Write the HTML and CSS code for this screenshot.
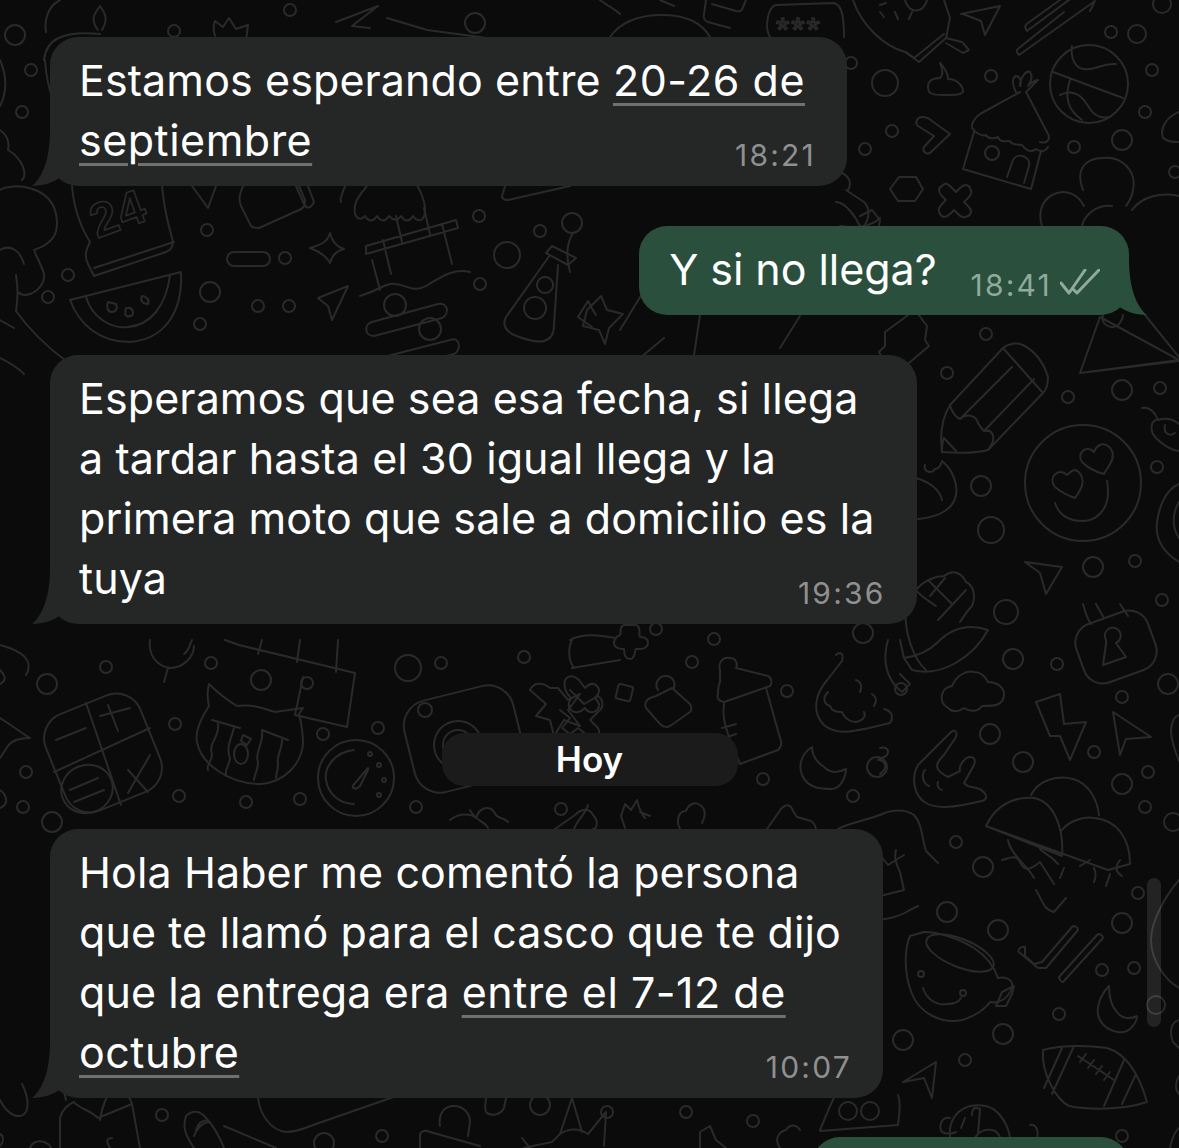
FILE: index.html
```html
<!DOCTYPE html>
<html lang="es">
<head>
<meta charset="UTF-8">
<title>Chat</title>
<meta name="viewport" content="width=device-width,initial-scale=1.0">
<link rel="stylesheet" href="styles.css">
</head>
<body>
<svg class="wallpaper" viewBox="0 0 1179 1148" aria-hidden="true">
  <!-- dots -->
  <g>
    <circle cx="15" cy="35" r="10"/><circle cx="31" cy="70" r="6"/><circle cx="22" cy="112" r="6"/><circle cx="174" cy="31" r="6"/><circle cx="290" cy="10" r="6"/><circle cx="475" cy="23" r="10"/>
    <circle cx="207" cy="230" r="6"/><circle cx="285" cy="258" r="6"/><circle cx="479" cy="216" r="6"/><circle cx="540" cy="231" r="6"/><circle cx="572" cy="223" r="10"/><circle cx="507" cy="255" r="13"/>
    <circle cx="68" cy="275" r="6"/><circle cx="48" cy="297" r="6"/><circle cx="210" cy="292" r="10"/><circle cx="200" cy="324" r="6"/><circle cx="258" cy="306" r="6"/><circle cx="289" cy="306" r="6"/><circle cx="480" cy="284" r="6"/>
    <circle cx="885" cy="83" r="13"/><circle cx="991" cy="76" r="6"/><circle cx="892" cy="131" r="6"/><circle cx="865" cy="149" r="6"/><circle cx="1111" cy="32" r="6"/><circle cx="1137" cy="34" r="9"/><circle cx="1152" cy="70" r="6"/><circle cx="1145" cy="112" r="6"/><circle cx="1074" cy="147" r="6"/><circle cx="1122" cy="140" r="10"/><circle cx="1175" cy="172" r="6"/><circle cx="992" cy="153" r="7"/><circle cx="851" cy="63" r="6"/><circle cx="1162" cy="4" r="9"/>
    <circle cx="986" cy="334" r="6"/><circle cx="947" cy="373" r="6"/><circle cx="1068" cy="397" r="6"/><circle cx="1122" cy="390" r="10"/><circle cx="1160" cy="388" r="6"/><circle cx="1157" cy="467" r="6"/><circle cx="981" cy="486" r="10"/><circle cx="991" cy="530" r="13"/><circle cx="1093" cy="567" r="10"/><circle cx="1135" cy="561" r="6"/><circle cx="1162" cy="600" r="6"/>
    <circle cx="1006" cy="612" r="12"/><circle cx="1013" cy="659" r="10"/><circle cx="1057" cy="664" r="6"/><circle cx="901" cy="689" r="6"/><circle cx="990" cy="734" r="10"/><circle cx="1023" cy="762" r="10"/><circle cx="1094" cy="752" r="6"/><circle cx="1122" cy="697" r="6"/><circle cx="1122" cy="784" r="10"/><circle cx="1148" cy="772" r="6"/><circle cx="1145" cy="807" r="6"/><circle cx="1168" cy="684" r="10"/><circle cx="1173" cy="822" r="9"/><circle cx="956" cy="842" r="6"/><circle cx="983" cy="867" r="10"/>
    <circle cx="947" cy="912" r="10"/><circle cx="998" cy="930" r="10"/><circle cx="1122" cy="923" r="10"/><circle cx="1138" cy="893" r="6"/><circle cx="1102" cy="970" r="6"/><circle cx="1134" cy="968" r="6"/><circle cx="1059" cy="1014" r="6"/><circle cx="1003" cy="1034" r="10"/><circle cx="903" cy="1040" r="10"/><circle cx="965" cy="1060" r="6"/><circle cx="1122" cy="1136" r="6"/><circle cx="753" cy="1121" r="6"/><circle cx="1156" cy="1005" r="9"/>
    <circle cx="106" cy="667" r="6"/><circle cx="47" cy="684" r="10"/><circle cx="211" cy="663" r="6"/><circle cx="261" cy="680" r="10"/><circle cx="307" cy="683" r="6"/><circle cx="408" cy="668" r="13"/><circle cx="441" cy="663" r="6"/><circle cx="524" cy="657" r="6"/><circle cx="175" cy="724" r="6"/><circle cx="323" cy="734" r="6"/><circle cx="378" cy="728" r="6"/><circle cx="26" cy="772" r="6"/><circle cx="179" cy="796" r="6"/><circle cx="246" cy="802" r="6"/><circle cx="300" cy="799" r="6"/><circle cx="416" cy="807" r="6"/><circle cx="561" cy="809" r="6"/><circle cx="23" cy="807" r="6"/><circle cx="52" cy="822" r="10"/>
    <circle cx="656" cy="629" r="6"/><circle cx="714" cy="639" r="6"/><circle cx="692" cy="662" r="6"/><circle cx="787" cy="691" r="6"/><circle cx="863" cy="633" r="10"/><circle cx="877" cy="767" r="10"/><circle cx="763" cy="779" r="6"/><circle cx="853" cy="796" r="6"/>
    <circle cx="162" cy="1115" r="6"/><circle cx="382" cy="1136" r="6"/><circle cx="607" cy="1112" r="6"/><circle cx="686" cy="1112" r="6"/><circle cx="324" cy="1143" r="10"/><circle cx="540" cy="1105" r="10"/>
  </g>
  <!-- top row -->
  <path d="M44 60C46 40 62 30 100 34M98 30c-8-10-4-16 2-24 6 8 8 14 2 24M45 60c2 30 10 50 25 72"/>
  <path d="M215 36c-3-8 0-15 0-15l8 6 6-9 7 11 12-4-2 16"/>
  <path d="M336 22l42-16-26 20 18 2M387 18l40 12 60 8"/>
  <path d="M770 37c-6-10-2-30 6-32l58-2c8 2 10 14 10 34" />
  <text class="doodle-text" x="776" y="41">***</text>
  <path d="M712 4l24 7c4 1 6 0 7-4l3-7M706 0l-2 14c-1 4 1 7 4 8l22 6"/>
  <path d="M610 37c10-14 28-22 52-22s40 8 48 22M600 0c8 6 16 10 20 14M660 0l14 6"/>
  <!-- top right -->
  <path d="M853 0c8 24 30 46 52 52l14 10 27-24 4-20-6-18M906 52l8 6 30-24M946 38l16 4 7 8-6 3-17-10"/>
  <path d="M905 0c4 14 18 14 22 0M880 5l6-2M912 12l-3 7M895 12l3 7M880 12l4 5"/>
  <path d="M963 14l-2 0 39-8-15 29-4-14z"/>
  <path d="M1027 31l54-40M1027 31c-3-4-2-6 1-8l32-23M1019 55l76-54M1019 55c-3-3-3-5 0-7l45-36M1094 3l-4 8"/>
  <circle cx="1089" cy="84" r="39"/>
  <path d="M1053 72l70 26M1072 46c-2 14 5 23 12 23 10 2 18-6 32-5M1070 80c-6 18-2 30 12 40M1060 95c16-8 24 4 30 14 4 6 10 10 20 8"/>
  <path d="M940 63c5 6 8 10 8 16 10 0 15 8 15 12s-8 4-20 4-15-2-15-8 4-9 12-9c4-4 2-9 0-15z"/>
  <path d="M1016 92c-4-8-4-14 0-16 4 0 6 6 4 10 0-8 6-16 10-14 3 4 1 10-2 14 4-4 8-6 10-6l-12 12 22 42c3 6-2 10-8 8M1020 92l-40 22c-8 6-10 14-6 16"/>
  <path d="M974 131c4 2 8 6 12 4 2 4 8 4 12 2 2 6 8 4 12 4 2 4 8 4 12 4 4 6 10 8 14 4 6 4 10 2 12-2M974 132l-11 37 68 20 10-38M1007 177l6-17c4-8 18-4 16 6l-5 17"/>
  <path d="M922 117c4 0 8 2 10 4l18 13-20 19c-4 2-8-2-6-6l10-11-16-10c-4-4 0-9 4-9z"/>
  <path d="M899 177l17 0 7 12-8 12h-17l-8-12z"/>
  <path d="M942 186c4-4 6-2 10 2l4 4 4-4c4-4 8-4 10 0s2 6-2 10l-4 4 4 4c4 4 4 8 0 10s-6 2-10-2l-4-4-4 4c-4 4-8 4-10 0s-2-6 2-10l4-4-4-4c-4-4-4-8 0-10z"/>
  <path d="M1042 226c-4-12-1-26 12-32 12-5 24 0 30 12M1082 226c2-10 14-22 30-20M1083 190c-8-20 2-32 20-32 18-2 34 12 30 32-1 6-4 12-7 16M1132 210c10-14 30-18 47-14M1179 112c-10 4-20 14-16 26 4 4 10 4 16 4"/>
  <path d="M840 172c10 4 12 12 8 18M860 226c-4-8-14-24-24-24M846 190l18 12c6 6 6 16 0 24"/>
  <!-- left column -->
  <path d="M0 60c6 14 8 30 0 46M0 130c6 4 10 10 8 20M8 150c14 8 20 24 14 30M0 190c14-8 50-4 56 24 4 20-4 30-22 36 6 16 14 24 8 34s-18 14-24 8M0 250c10-6 20 0 24 14M16 275c2 12 2 24 0 36 10 14 26 32 50 50M0 320l14 8"/>
  <path d="M60 0C48 6 44 20 46 32M0 358c8 4 18 10 24 16"/>
  <!-- calendar 24 -->
  <path d="M72 186c2 24 8 40 18 56-4 8-6 14-2 22l6 12 72-24c6-2 8-8 6-14-4-14-8-30-10-52M94 268l80-26"/>
  <text class="doodle-text doodle-num" x="90" y="232" transform="rotate(-20 112 215)">24</text>
  <path d="M192 186l16 22 8-22M243 186c-3 8-5 12-2 20l10 20c2 2 6 2 8 2l40-18c6-2 6-6 6-10l-6-14M296 186l8 18c2 4 6 6 10-2l-6-16"/>
  <path d="M310 248c10-3 18-6 20-15 2 8 6 14 14 16-8 2-12 6-14 14-4-8-12-12-20-15z"/>
  <rect x="227" y="252" width="43" height="14" rx="7"/>
  <path d="M345 186c-2 6-6 14-4 16M367 186c-8 10-14 16-12 28 4 8 8 4 10 2 4 6 8 6 12 0 4 6 8 6 12 0 4 4 8 6 12 0 4 6 8 6 12 0 6 8 12 4 12-6 0-12-6-24-18-40"/>
  <path d="M366 246l90-26 2 8-92 26zM383 240l8 34M442 224l10 40M396 216l6 26M424 208l6 26M372 260l8 30M360 296c20-6 20-10 30-12 14-2 22 10 36 2 14-8 26-18 44-14"/>
  <path d="M505 186l-3 10c0 3 2 4 6 4l62-14"/>
  <path d="M70 300l111-28c2 42-18 68-52 70-30 0-50-18-59-42zM86 297c6 20 24 32 42 30 22-2 38-20 42-52"/>
  <path d="M108 302c-2 6 0 10 4 10s6-4 4-8zM126 308c-2 6 0 10 4 8 4 0 4-6 0-8zM142 296c-2 4 0 8 6 8 2-4-2-8-6-8z"/>
  <path d="M318 298l30-12-16 34-4-14z"/>
  <path d="M372 322c-8 2-8 14 2 14l68-18c8-4 6-16-4-14zM380 358c-8 2-8 14 2 14l72-18c8-4 6-18-4-14z"/>
  <circle cx="395" cy="305" r="11"/><circle cx="430" cy="329" r="11"/>
  <path d="M552 246l24 12-8 7-22-12zM550 255l-44 62c-4 8 0 14 8 18 10 4 22 8 30 6 8-2 10-8 10-16l4-60M545 277a8 8 0 1 0 .1 0M535 297a11 11 0 1 0 .1 0"/>
  <path d="M574 232c-8 10-8 26-4 40M596 315c-4-6-6-10-8-14l-10 16 14 10"/>
  <path d="M587 310l14-14 6 14 16 4-14 14-4 16-6-14-16-4z"/>
  <path d="M620 330l28-46 86 30M700 315l-6 40M640 358l24-20M800 316l-20 32"/>
  <path d="M885 332l30-22 12 16-2 14 4 6-26 22-10-10-8 4-6-10 6-6z"/>
  <path d="M860 216l12-6 8 10-2 12M840 226c14 2 30 2 40-8M975 244c6-6 10-4 12 0s0 6-4 10-8 6-12 2 0-8 4-12z"/>
  <!-- pencil -->
  <path d="M942 452c-2-16 0-34 8-47l53-57c8-6 16-5 20-3 12 6 20 16 25 32 0 6-1 12-5 16l-55 57c-14 4-32 3-46 2z"/>
  <path d="M1003 348l40 45M950 405c2 8 6 12 10 14 6-6 16-4 18 4 2 4 4 6 6 8 8-2 14 6 4 19M960 419l52-52M984 431l50-52M942 452c0-6 0-10 2-14l12 13"/>
  <circle cx="1083" cy="483" r="58"/>
  <path d="M1055 487c-8-10 4-20 12-12 2-2 5-5 8-5 6 2 10 10 6 18-2 4-4 8-6 10-6-2-14-6-20-11zM1082 462c-6-8 4-18 12-10 2-6 8-10 14-6 6 4 6 12 2 18-2 4-4 6-6 10-8-2-16-6-22-12z"/>
  <path d="M1055 503c4 12 14 18 28 18 14 0 24-12 25-26 0-6 0-10-1-14"/>
  <path d="M1080 373l20-56 79 43zM1080 373l99-12"/>
  <path d="M1103 315c-2 6 2 12 10 12 6 0 10-8 10-12M1145 315l34 42"/>
  <path d="M1142 408c8-2 14 6 16 12 6-2 14-2 21 4M1156 420c-6 2-6 12 0 18 6 6 14 12 23 13M1165 425c-2 8 4 12 10 8"/>
  <path d="M1179 484c-14 6-20 24-22 38-2 16 6 30 22 40M1179 502c-6 10-8 24 0 36"/>
  <path d="M925 465c-2 6 6 10 10 4 4 0 6-4 7-8 10 8 16 22 14 34-2 12-14 22-38 24M916 478c14 4 24 12 26 22"/>
  <path d="M1025 562l37 5-16 27-6-21z"/>
  <!-- corn -->
  <path d="M916 590c8-10 20-14 28-14 10-8 18-2 22 6 8 4 10 14 6 24-6 6-8 10-12 16M916 590c4 6 12 10 20 16M928 580l24 24M945 578l-15 18M966 590l-28 30M900 640l4 18 8 12c30 8 62-14 76-40-24-8-40 2-50 12-8 8-20 14-34 16M906 612c-2 20 8 48 20 58M888 640c-6 20-2 40 14 52l8-8-10-10"/>
  <!-- lock keyhole -->
  <rect x="1078" y="616" rx="20" width="76" height="62" transform="rotate(-20 1116 647)"/>
  <path d="M1083 604c2 8 4 14 8 20M1120 604l8 12M1096 604c4 8 6 10 8 14"/>
  <path d="M1106 640a8 8 0 1 1 10 3l10 14-23 8 3-21z"/>
  <path d="M948 708c-10-6-8-20 4-22 4-10 14-16 22-14 8 0 12 6 14 10 10 0 16 6 16 12 0 12-10 12-22 12-4 6-12 6-18 2-6 4-12 4-16 0z"/>
  <path d="M1036 702l24-8 4 30 22-2-16 38-10-24-10 0z"/>
  <path d="M1113 712l38 25-25 2-6 16z"/>
  <path d="M950 733c4-4 8-2 6 4l-12 18c-8 8-12 14 4 22l12-6c-2-6 6-14 10-14s6 2 4 8l-10 18c4 4 8 4 8 4 14 2 18 12 10 14-20 4-42 10-56 2-14-8-14-28-8-38zM925 770c-4 4-2 14 4 16M938 782c-2 4 2 8 4 8"/>
  <path d="M1031 795c8-16 28-20 42-16 14 4 24 18 26 36M986 826c10-22 30-30 48-28 20 4 30 30 28 58zM986 826l122 44M1062 830c6-8 20-14 32-12 24 2 36 22 36 46l-22 6"/>
  <path d="M1008 840c2 14 20 26 26 38M1040 846c-2 6 8 6 18 18M1094 868c2 4 2 10 0 14M1110 874l-4 12"/>
  <path d="M1179 715c-6 2-8 10-8 16 0 10 4 20 8 30M880 748c8-2 10 4 6 8l-8 4M880 760c6 2 8 8 0 14"/>
  <path d="M880 815c12-6 26-6 34 0 8 8 8 24 12 36l12 12M880 855l8 10 16-10"/>
  <!-- centre band -->
  <path d="M620 635c2-2-2-8 4-10l12 0c6 2 2 10 4 12 6 0 8 2 8 6s-4 6-8 6l-4 0c-2 2 0 10-6 10s-6-8-6-10c-2 0-10 0-10-6s6-8 6-8zM570 640c14-8 34-4 46-2M572 668l48-8M572 640c-4 8-4 20 2 28"/>
  <path d="M570 690l14 14 14-8c6 4 6 12 0 16l-8 8 8 8c4 8-4 14-10 8l-10-8-8 6-8-6 8-10-10-8"/>
  <rect x="617" y="685" width="15" height="15" rx="2" transform="rotate(14 624 692)"/>
  <path d="M658 690c-4-6 0-14 8-14 6 0 10 6 8 12M656 696l16-8 18 16c2 4 2 6 0 8l-20 14c-4 2-8 0-10-2l-14-16c-2-4 0-8 4-10z"/>
  <path d="M720 670c-2-6 2-14 10-12 6 0 8 6 6 10l32 8c4 2 4 8 2 10l-46 16c-4 0-8-4-6-8 0-4 0-8 2-12zM724 704c-2 14 2 24 6 36l10 24 38-14c4-4 4-8 2-12l-14-50M722 728l14-4M724 738l12-4"/>
  <path d="M836 655c4-4 8-2 6 6l-14 18c-14 16-16 34-4 46 14 12 32 6 66-2 4-6 2-12-6-14M828 692c-6 6-4 12 2 14 2 6 8 6 12 6 2 6 8 10 14 10 8-2 10-6 8-10M856 680c6 2 6 8 4 12M872 694c6 4 4 8 2 12"/>
  <path d="M812 747c-10 6-14 18-10 28 6 14 20 14 30 14 8 0 14-12 14-20-8 4-16 4-22-2-6-4-12-10-12-20z"/>
  <!-- lower left -->
  <path d="M150 640c-2 14 6 26 20 28 14 0 24-12 24-22M192 640c-2 2-2 10-8 14M168 668l-4 14"/>
  <path d="M225 640l14 5 116 28-8 54-52-12 8-38M262 640l-4 14M300 640l-3 22M338 640l-2 32"/>
  <path d="M0 670c4 4 8 10 0 14M0 718c10 6 20 14 30 20-10 0-18 2-22 8l-8 12M0 645c30 8 32 20 26 30M0 790c6 4 10 14 0 18"/>
  <rect x="52" y="701" width="102" height="104" rx="26" transform="rotate(-22 103 753)"/>
  <path d="M86 703l35 102M54 772l96-44M56 740l30-12M108 705l10 26M100 716l30-8M128 770l20 22M150 755l-22 38"/>
  <ellipse cx="87" cy="789" rx="26" ry="24" transform="rotate(-20 87 789)"/>
  <path d="M70 790l28-12M74 802l30-12"/>
  <path d="M209 684c-2 8-2 14 0 22-8 12-14 26-12 36 4 22 32 42 64 42 24-2 40-20 42-40 0-14-2-22-4-30l4-6-28 4c-12-4-24-8-38-6 -10-6-20-14-28-22z"/>
  <path d="M212 720l28 8M262 730l26 10M218 724c2 12-10 20-6 30 0 8-6 10-4 16M234 728c-4 14-8 20-4 30 0 6-6 12-4 18M262 732c2 10-8 22-4 30 0 8-4 14-4 18M282 740c0 10-6 16-4 24 0 6-2 10-2 14"/>
  <ellipse cx="241" cy="754" rx="7" ry="10"/><path d="M243 735l8 4-4 6-6-4z"/>
  <circle cx="356" cy="778" r="38"/>
  <path d="M354 750c-20 2-30 18-28 30 2 14 14 24 28 24M368 768l-12 14c-4 4-4 6-2 6 2 2 4 0 6-2l8-16z"/>
  <circle cx="370" cy="754" r="2"/><circle cx="379" cy="765" r="2"/><circle cx="384" cy="780" r="2"/><circle cx="379" cy="795" r="2"/>
  <rect x="408" y="692" width="112" height="94" rx="26" transform="rotate(-14 464 739)"/>
  <circle cx="425" cy="710" r="7"/><circle cx="458" cy="745" r="24"/><circle cx="458" cy="745" r="15"/>
  <path d="M530 690c4-8 12-8 20-2l8 0 10 12 12-6-12 16 12 16-16-6-10 16-4-16-14-4 10-12z"/>
  <path d="M565 680c4-6 10-4 14 0l6 8c4-4 8-6 12-2s2 8-2 12c4 4 6 8 2 12s-10 2-12-2c-4 4-10 6-14 2s-2-8 0-12c-4-4-8-10-6-18z"/>
  <path d="M450 820c10-8 22-6 26-2 4-12 14-12 18-6 4 8 8 4 14 10M470 810c4 10 16 12 18 18M588 805c-2 8-10 14-14 24M555 829l20-14c6-6 14-8 18 0 6 6 4 14 0 14"/>
  <path d="M625 828l-4-12 4-12 6 6 6-10c2 8 4 14 8 18M640 812l10 4M680 829c-4-8-2-18 6-18 2-6 8-10 14-6s6 10 2 18"/>
  <path d="M767 829l14-20c6-6 10-4 12 2l4 6 14 4c6 4 6 12 2 14M838 829c10-6 26-8 42-14"/>
  <!-- cup and lower right -->
  <path d="M910 936c-6 14-6 38 2 58 8 20 30 30 50 26 14-4 24-12 28-18 10 2 18-4 22-14 2-8-6-12-14-10-4-12-12-22-24-30-16-10-36-16-50-16z"/>
  <ellipse cx="960" cy="953" rx="36" ry="14" transform="rotate(22 960 953)"/>
  <path d="M996 1006l6-14 12-6-2 8-6 12zM923 988c4 12 14 18 24 16 8 0 12-2 14-6"/>
  <circle cx="921" cy="974" r="3"/><circle cx="963" cy="993" r="3"/>
  <path d="M1025 956l9 8 8-2 30-35c2-2 6 0 6 3l-32 38-8 0-19-16c-2-2 2-6 6-5zM1059 977l38-42c2-2 6 0 6 3l-40 44c-2 0-4-3-4-5z"/>
  <path d="M1109 986c-8 8-14 22-10 32 6 14 24 18 32 10 4-4 6-8 6-12-8 4-16 2-20-4-6-6-8-14-8-26z"/>
  <path d="M1043 1050c22-6 50-4 64-2 20 6 32 26 40 54-24 8-58 8-78 4-12-6-28-32-26-56zM1062 1048l-18 40M1074 1046l-22 48M1124 1060l-20 46M1136 1074l-14 30M1078 1056l36 24M1086 1054l-6 8M1094 1060l-6 8M1102 1066l-6 8M1110 1072l-6 8"/>
  <path d="M903 1082l33-20-4 36-8-20z"/>
  <path d="M1179 1020c-8 2-10 12-6 22l6 6M1179 880c-12 14-28 40-28 60 0 20 14 40 28 48M1179 1076c-4 6-4 14 0 18"/>
  <path d="M820 1130c6-14 12-30 18-40M898 1095c4 10 0 26 0 30l-78 6"/>
  <circle cx="848" cy="1111" r="9"/><circle cx="870" cy="1111" r="9"/>
  <path d="M972 1115c0-8 4-8 8-6M950 1118c-8-2-12 8-8 14 4 2 10 2 14 0M1030 1125c6-2 10 8 6 14-2 2-6 4-10 4M955 1148c-6-8-8-20 0-32 10-14 34-14 44-2 10 12 14 26 8 34M972 1148c0-10 8-20 20-18 8 2 10 10 8 18M965 1118l-4 10M980 1110l-2 24"/>
  <path d="M1170 1148c2-10 4-16 9-20"/>
  <path d="M1055 1140l10 8M880 920c14-2 24-6 30-10l8-4M880 896l24-6-4-18c-4-8-6-14-4-22M1002 860c8-2 14-6 18 2 4 10 10 8 20 0l14 22M1036 890c6 10 8 20 18 22l12-14M1064 868l-4 10M1120 860c-6 8-4 12 2 16M1090 860l-10 6"/>
  <!-- bottom row -->
  <path d="M0 1100c8 16 20 20 26 12 4-10 0-20-4-28"/>
  <path d="M60 1148l0-30c2-8 8-14 14-16 4 6 16 8 24 16l34-14 8 44M66 1100l-4-18 16-6 4 16M100 1120c2-12 6-24 12-30 8-4 18 6 20 14M70 1086l8 8"/>
  <path d="M186 1116c-4 12 0 20 8 32M186 1116c6-6 14-6 20 2 8 8 14 20 18 30M194 1136c2-6 8-14 16-14M196 1130c2-6 6-10 12-10M224 1126l52 22"/>
  <path d="M258 1098c2 16 12 32 28 34 12 0 24-6 30-8l86-30"/>
  <path d="M420 1148l0-14c2-4 6-4 10-2l50 14M440 1126c-2-12 4-20 14-20s16 8 16 16l-2 14M486 1098c0 6-2 8 0 14 4 4 14 4 18-4l2-10"/>
  <path d="M524 1148c8-2 18-4 28-6l8-8 12-36 10 34M560 1134c8-6 20-6 28 0l18-22-2 34M530 1148l-8-10"/>
  <path d="M700 1148l0-16 10-6 6 14 10 8M780 1148c-6-8-2-16 6-18 4-6 10-6 14 0"/>
  <path d="M0 1134c4 2 4 8 0 12M110 1148c-4-6-4-10 2-10M30 1148c2-6 8-8 14-6s8 6 6 6"/>
</svg>

<div class="chat">
  <div class="bubble in">
    <svg class="tail" viewBox="0 0 40 60" aria-hidden="true"><path d="M20 4C20 34 12 52 2 60 14 60 24 56 31 51L40 40 40 4Z"/></svg>
    <p class="text">Estamos esperando entre <span class="date-link">20-26 de</span><br><span class="date-link">septiembre</span></p>
    <span class="time">18:21</span>
  </div>

  <div class="bubble out">
    <svg class="tail" viewBox="0 0 40 60" aria-hidden="true"><path d="M20 4C20 34 12 52 2 60 14 60 24 56 31 51L40 40 40 4Z"/></svg>
    <p class="text">Y si no llega?</p>
    <span class="time">18:41</span>
    <svg class="ticks" viewBox="0 0 40 26" aria-hidden="true"><path d="M1 14l8 10L25 1M13 20l4 4L39 1"/></svg>
  </div>

  <div class="bubble in">
    <svg class="tail" viewBox="0 0 40 60" aria-hidden="true"><path d="M20 4C20 34 12 52 2 60 14 60 24 56 31 51L40 40 40 4Z"/></svg>
    <p class="text">Esperamos que sea esa fecha, si llega<br>a tardar hasta el 30 igual llega y la<br>primera moto que sale a domicilio es la<br>tuya</p>
    <span class="time">19:36</span>
  </div>

  <div class="day">Hoy</div>

  <div class="bubble in">
    <svg class="tail" viewBox="0 0 40 60" aria-hidden="true"><path d="M20 4C20 34 12 52 2 60 14 60 24 56 31 51L40 40 40 4Z"/></svg>
    <p class="text">Hola Haber me comentó la persona<br>que te llamó para el casco que te dijo<br>que la entrega era <span class="date-link">entre el 7-12 de</span><br><span class="date-link">octubre</span></p>
    <span class="time">10:07</span>
  </div>

  <div class="bubble out cut"></div>
</div>

<div class="scrollbar"></div>
</body>
</html>
```

FILE: styles.css
```css
:root{
  --c-bg:#0b0b0b;--c-doodle:#2a2a2a;--c-in:#252626;--c-out:#2a4f3c;
  --c-day:#1b1b1b;--c-text:#fff;--c-time:#8f9090;--c-time-out:#90aa9c;
}
*{box-sizing:border-box}
html,body{margin:0;height:1148px;overflow:hidden;background:var(--c-bg)}
body{position:relative;font-family:Inter,"Liberation Sans",sans-serif;color:var(--c-text)}

.wallpaper{
  position:absolute;left:0;top:0;width:1179px;height:1148px;
  fill:none;stroke:var(--c-doodle);stroke-width:2;stroke-linejoin:round;stroke-linecap:round
}
.doodle-text{font-family:"Liberation Sans",sans-serif;font-size:34px;letter-spacing:2px;stroke-width:1.6}
.doodle-num{font-size:48px;font-weight:700}

.chat{
  position:relative;display:flex;flex-direction:column;align-items:flex-start;
  height:1148px;overflow:hidden;padding:37px 50px 0
}

.bubble{
  position:relative;flex:none;display:grid;padding:13px 42px 16px 29px;border-radius:28px;
  background:var(--c-in);margin-bottom:40px
}
.bubble.out{
  align-self:flex-end;display:flex;align-items:flex-end;
  padding:13px 29px 16px 30px;background:var(--c-out)
}
.bubble.cut{width:317px;height:89px;margin-top:-1px}

.tail{position:absolute;left:-20px;bottom:0;width:40px;height:60px;fill:var(--c-in)}
.out .tail{left:auto;right:-20px;transform:scaleX(-1);fill:var(--c-out)}

.text{
  grid-area:1/1;margin:0;font-size:43px;line-height:60px;letter-spacing:.1px;
  white-space:nowrap
}
.out .text{letter-spacing:-.05px}
.date-link{
  letter-spacing:.5px;text-decoration:underline;text-decoration-color:#6f7070;
  text-decoration-thickness:3px;text-underline-offset:7px
}
.time{
  grid-area:1/1;align-self:end;justify-self:end;margin:0 -11px 0 0;
  font-size:30px;line-height:30px;letter-spacing:2.2px;color:var(--c-time)
}
.out .time{margin:0 0 -1px 34px;color:var(--c-time-out)}
.ticks{
  flex:none;width:40px;height:26px;margin:0 0 4px 8px;fill:none;
  stroke:var(--c-time-out);stroke-width:3;stroke-linecap:round;stroke-linejoin:round
}

.day{
  flex:none;align-self:center;width:296px;height:53px;margin:69px 0 43px 0;border-radius:22px;
  background:var(--c-day);font-size:35px;font-weight:600;line-height:53px;text-align:center
}

.scrollbar{
  position:absolute;left:1147px;top:878px;width:14px;height:149px;border-radius:7px;
  background:rgba(255,255,255,.1)
}
```
